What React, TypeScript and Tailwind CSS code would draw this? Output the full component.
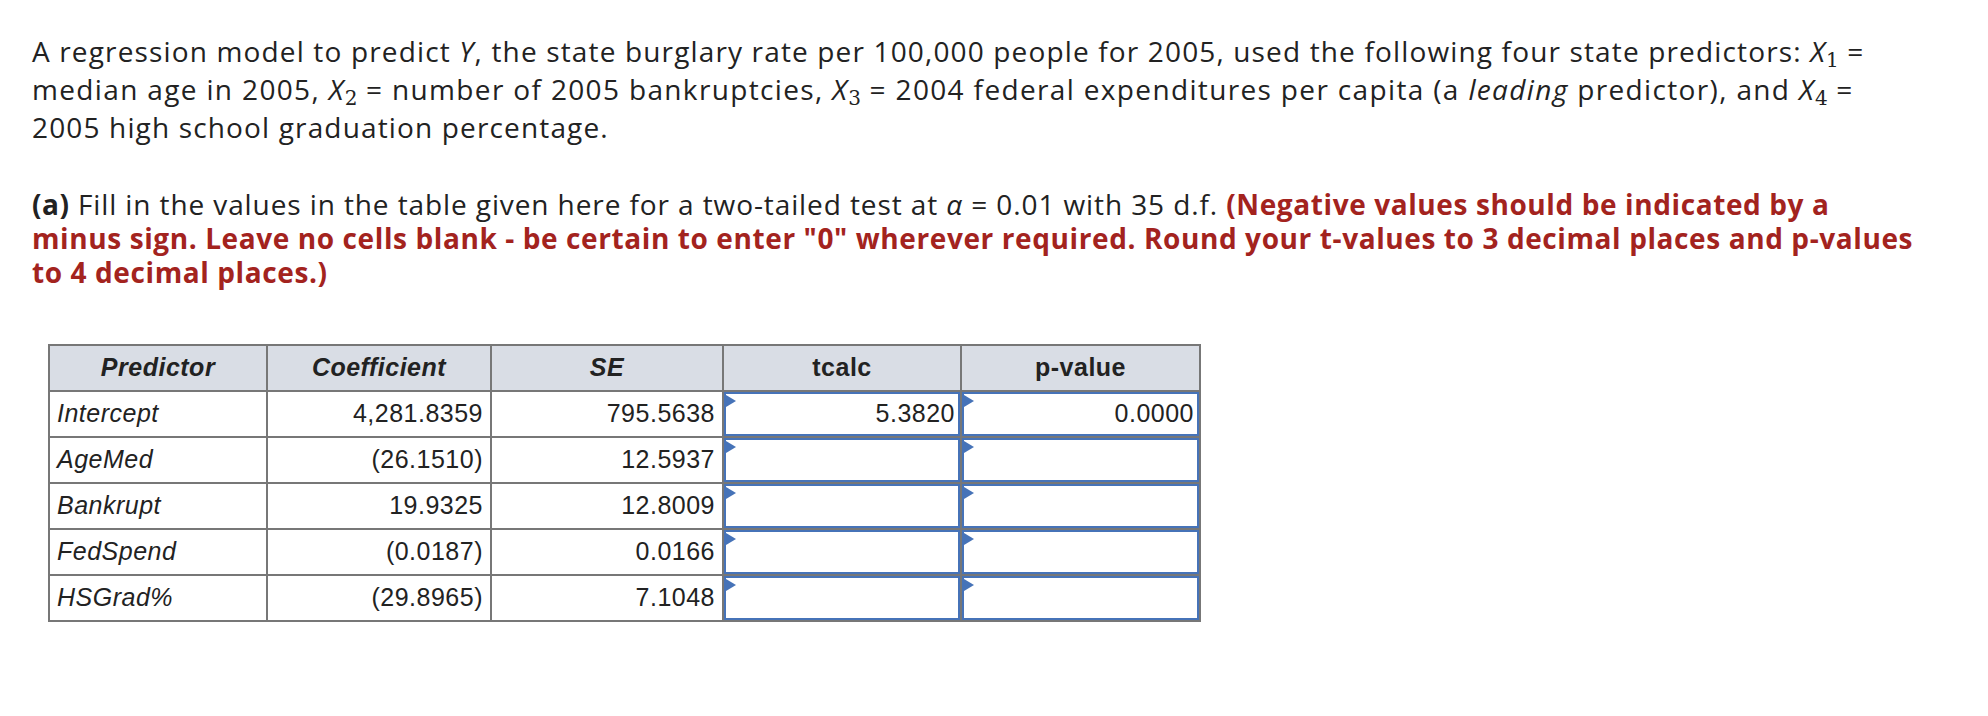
import React from "react";

const rows = [
  { name: "Intercept", coef: "4,281.8359", se: "795.5638", t: "5.3820", p: "0.0000" },
  { name: "AgeMed", coef: "(26.1510)", se: "12.5937", t: "", p: "" },
  { name: "Bankrupt", coef: "19.9325", se: "12.8009", t: "", p: "" },
  { name: "FedSpend", coef: "(0.0187)", se: "0.0166", t: "", p: "" },
  { name: "HSGrad%", coef: "(29.8965)", se: "7.1048", t: "", p: "" },
];

function Sub({ children }: { children: React.ReactNode }) {
  return <sub className="not-italic font-['DejaVu_Serif',serif] text-[20px] tracking-normal">{children}</sub>;
}

function InputCell({ value }: { value: string }) {
  return (
    <div className="h-[46px] border-r-2 border-b-2 border-[#777]">
      <div className="relative h-full w-full border-2 border-[#4673b8] bg-white flex items-center justify-end pr-[3px]">
        <svg className="absolute left-0 top-[1px]" width="10" height="12" viewBox="0 0 10 12">
          <polygon points="0,0 10,6 0,12" fill="#4673b8" />
        </svg>
        <span>{value}</span>
      </div>
    </div>
  );
}

export default function App() {
  return (
    <div className="w-[1988px] h-[716px] bg-white pl-[32px] pt-[32px] font-['Open_Sans',sans-serif] text-[#222]">
      <p className="text-[28px] leading-[38px] tracking-[1.15px]">
        A regression model to predict <i>Y</i>, the state burglary rate per 100,000 people for 2005, used the following four state predictors: <i>X</i><Sub>1</Sub> =
        <br />
        <span className="tracking-[1.35px]">
          median age in 2005, <i>X</i><Sub>2</Sub> = number of 2005 bankruptcies, <i>X</i><Sub>3</Sub> = 2004 federal expenditures per capita (a <i>leading</i> predictor), and <i>X</i><Sub>4</Sub> =
        </span>
        <br />
        2005 high school graduation percentage.
      </p>
      <p className="mt-[41px] text-[28px] leading-[34px] tracking-[0.9px]">
        <b className="tracking-[0.6px]">(a)</b> Fill in the values in the table given here for a two-tailed test at <i>α</i> = 0.01 with 35 d.f.{" "}
        <b className="text-[#a3231e] tracking-[0.6px]">
          (Negative values should be indicated by a
          <br />
          minus sign. Leave no cells blank - be certain to enter "0" wherever required. Round your t-values to 3 decimal places and p-values
          <br />
          to 4 decimal places.)
        </b>
      </p>
      <div className="mt-[55px] ml-[16px] w-[1153px] grid grid-cols-[218px_224px_232px_238px_239px] border-l-2 border-t-2 border-[#777] font-['Liberation_Sans',Arial,sans-serif] text-[25px] tracking-[0.5px] text-[#222]">
        <div className="h-[46px] bg-[#d9dde5] border-r-2 border-b-2 border-[#777] flex items-center justify-center font-bold italic">Predictor</div>
        <div className="h-[46px] bg-[#d9dde5] border-r-2 border-b-2 border-[#777] flex items-center justify-center font-bold italic">Coefficient</div>
        <div className="h-[46px] bg-[#d9dde5] border-r-2 border-b-2 border-[#777] flex items-center justify-center font-bold italic">SE</div>
        <div className="h-[46px] bg-[#d9dde5] border-r-2 border-b-2 border-[#777] flex items-center justify-center font-bold">tcalc</div>
        <div className="h-[46px] bg-[#d9dde5] border-r-2 border-b-2 border-[#777] flex items-center justify-center font-bold">p-value</div>
        {rows.map((r) => (
          <React.Fragment key={r.name}>
            <div className="h-[46px] border-r-2 border-b-2 border-[#777] flex items-center pl-[7px] italic">{r.name}</div>
            <div className="h-[46px] border-r-2 border-b-2 border-[#777] flex items-center justify-end pr-[7px]">{r.coef}</div>
            <div className="h-[46px] border-r-2 border-b-2 border-[#777] flex items-center justify-end pr-[7px]">{r.se}</div>
            <InputCell value={r.t} />
            <InputCell value={r.p} />
          </React.Fragment>
        ))}
      </div>
    </div>
  );
}
